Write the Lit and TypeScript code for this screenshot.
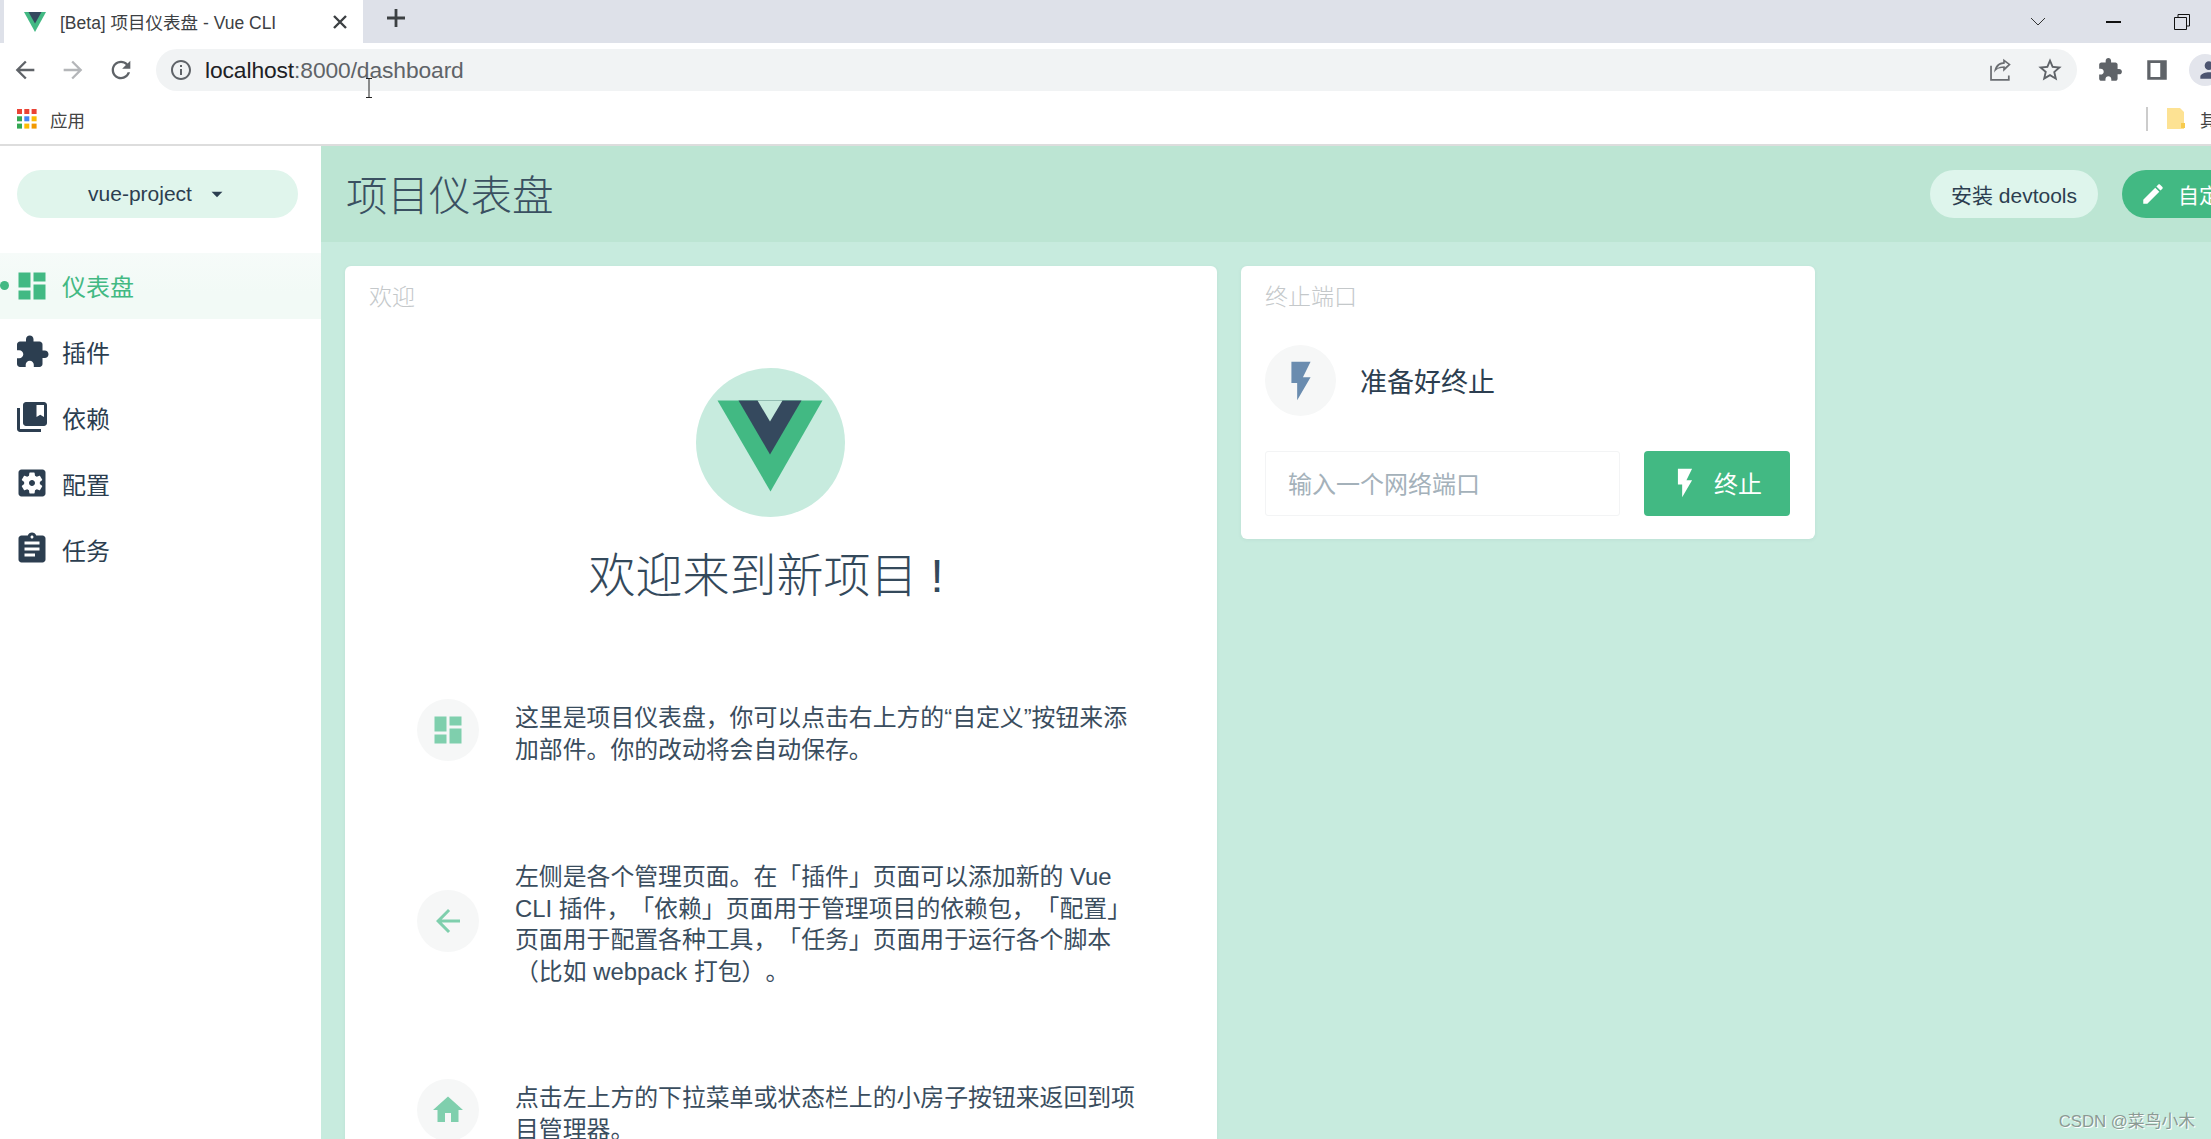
import { LitElement, html, css, svg } from "lit";
import { customElement } from "lit/decorators.js";

const P: Record<string, string> = {
  dashboard: "M3 13h8V3H3v10zm0 8h8v-6H3v6zm10 0h8V11h-8v10zm0-18v6h8V3h-8z",
  extension: "M20.5 11H19V7c0-1.1-.9-2-2-2h-4V3.5C13 2.12 11.88 1 10.5 1S8 2.12 8 3.5V5H4c-1.1 0-1.99.9-1.99 2v3.8H3.5c1.49 0 2.7 1.21 2.7 2.7s-1.21 2.7-2.7 2.7H2V20c0 1.1.9 2 2 2h3.8v-1.5c0-1.49 1.21-2.7 2.7-2.7 1.49 0 2.7 1.21 2.7 2.7V22H17c1.1 0 2-.9 2-2v-4h1.5c1.38 0 2.5-1.12 2.5-2.5S21.88 11 20.5 11z",
  book: "M4 6H2v14c0 1.1.9 2 2 2h14v-2H4V6zm16-4H8c-1.1 0-2 .9-2 2v12c0 1.1.9 2 2 2h12c1.1 0 2-.9 2-2V4c0-1.1-.9-2-2-2zm0 10l-2.5-1.5L15 12V4h5v8z",
  settings: "M12 10c-1.1 0-2 .9-2 2s.9 2 2 2 2-.9 2-2-.9-2-2-2zm7-7H5c-1.11 0-2 .9-2 2v14c0 1.1.89 2 2 2h14c1.11 0 2-.9 2-2V5c0-1.1-.89-2-2-2zm-1.75 9c0 .23-.02.46-.05.68l1.48 1.16c.13.11.17.3.08.45l-1.4 2.42c-.09.15-.27.21-.43.15l-1.74-.7c-.36.28-.76.51-1.18.69l-.26 1.85c-.03.17-.18.3-.35.3h-2.8c-.17 0-.32-.13-.35-.29l-.26-1.85c-.43-.18-.82-.41-1.18-.69l-1.74.7c-.16.06-.34 0-.43-.15l-1.4-2.42c-.09-.15-.05-.34.08-.45l1.48-1.16c-.03-.23-.05-.46-.05-.69 0-.23.02-.46.05-.68l-1.48-1.16c-.13-.11-.17-.3-.08-.45l1.4-2.42c.09-.15.27-.21.43-.15l1.74.7c.36-.28.76-.51 1.18-.69l.26-1.85c.03-.17.18-.3.35-.3h2.8c.17 0 .32.13.35.29l.26 1.85c.43.18.82.41 1.18.69l1.74-.7c.16-.06.34 0 .43.15l1.4 2.42c.09.15.05.34-.08.45l-1.48 1.16c.03.23.05.46.05.69z",
  assignment: "M19 3h-4.18C14.4 1.84 13.3 1 12 1c-1.3 0-2.4.84-2.82 2H5c-1.1 0-2 .9-2 2v14c0 1.1.9 2 2 2h14c1.1 0 2-.9 2-2V5c0-1.1-.9-2-2-2zm-7 0c.55 0 1 .45 1 1s-.45 1-1 1-1-.45-1-1 .45-1 1-1zm2 14H7v-2h7v2zm3-4H7v-2h10v2zm0-4H7V7h10v2z",
  flash: "M7 2v11h3v9l7-12h-4l4-8z",
  edit: "M3 17.25V21h3.75L17.81 9.94l-3.75-3.75L3 17.25zM20.71 7.04c.39-.39.39-1.02 0-1.41l-2.34-2.34c-.39-.39-1.02-.39-1.41 0l-1.83 1.83 3.75 3.75 1.83-1.83z",
  back: "M20 11H7.83l5.59-5.59L12 4l-8 8 8 8 1.41-1.41L7.83 13H20v-2z",
  forward: "M12 4l-1.41 1.41L16.17 11H4v2h12.17l-5.58 5.59L12 20l8-8z",
  home: "M10 20v-6h4v6h5v-8h3L12 3 2 12h3v8z",
  drop: "M7 10l5 5 5-5z",
  refresh: "M17.65 6.35C16.2 4.9 14.21 4 12 4c-4.42 0-7.99 3.58-7.99 8s3.57 8 7.99 8c3.73 0 6.84-2.55 7.73-6h-2.08c-.82 2.33-3.04 4-5.65 4-3.31 0-6-2.69-6-6s2.69-6 6-6c1.66 0 3.14.69 4.22 1.78L13 11h7V4l-2.35 2.35z",
  star: "M22 9.24l-7.19-.62L12 2 9.19 8.63 2 9.24l5.46 4.73L5.82 21 12 17.27 18.18 21l-1.63-7.03L22 9.24zM12 15.4l-3.76 2.27 1-4.28-3.32-2.88 4.38-.38L12 6.1l1.71 4.04 4.38.38-3.32 2.88 1 4.28L12 15.4z",
  person: "M12 12c2.21 0 4-1.79 4-4s-1.79-4-4-4-4 1.79-4 4 1.79 4 4 4zm0 2c-2.67 0-8 1.34-8 4v2h16v-2c0-2.66-5.33-4-8-4z",
  info: "M11 7h2v2h-2zm0 4h2v6h-2zm1-9C6.48 2 2 6.48 2 12s4.48 10 10 10 10-4.48 10-10S17.52 2 12 2zm0 18c-4.41 0-8-3.59-8-8s3.59-8 8-8 8 3.59 8 8-3.59 8-8 8z",
  share: "M2 8v14h18v-5h-1.600v3.400H3.600V8H2zm19-1-7-5.500v3.300C8.500 5.200 6 9 5.700 14.500 7.500 11.300 10 10.200 14 10.200v3.300L21 7zM15.500 4.700 18.700 7l-3.200 2.800V8.600c-3.200 0-5.600.7-7.200 2.300 1-2.900 3.400-4.500 7.200-4.600V4.700z",
  panel: "M3 3h18v18H3V3zm3 2.500v13h9v-13H6z",
};

const icon = (name: string, cls: string) =>
  html`<svg class="ic ${cls}" viewBox="0 0 24 24" aria-hidden="true"><path d=${P[name]}></path></svg>`;

const grid = [
  ["#ea4335", "#ea4335", "#ea4335"],
  ["#34a853", "#4285f4", "#fbbc04"],
  ["#34a853", "#fbbc04", "#f29900"],
];

const nav = [
  { i: "dashboard", t: "仪表盘", active: true },
  { i: "extension", t: "插件" },
  { i: "book", t: "依赖" },
  { i: "settings", t: "配置" },
  { i: "assignment", t: "任务" },
];

@customElement("app-root")
export class AppRoot extends LitElement {
  static styles = css`
    :host {
      display: block;
      position: relative;
      width: 2211px;
      height: 1139px;
      overflow: hidden;
      background: #fff;
      color: #2c3e50;
      font-family: "Liberation Sans", "Noto Sans CJK SC", sans-serif;
      font-weight: 400;
    }
    * { box-sizing: border-box; }
    .ic { display: block; flex: none; fill: currentColor; }
    .tabs { height: 43px; background: #dee1e9; display: flex; align-items: stretch; padding-left: 4px; }
    .tab { width: 359px; background: #fff; display: flex; align-items: center; padding-left: 20px; color: #3c4043; flex: none; }
    .tab-title { margin-left: 14px; font-size: 17.5px; white-space: nowrap; }
    .x { margin-left: auto; margin-right: 13px; width: 20px; height: 20px; }
    .plus { width: 30px; height: 30px; margin: 3px 0 0 18px; fill: #3c4043; }
    .win { margin-left: auto; display: flex; align-items: center; color: #222; }
    .chev { width: 16px; height: 10px; margin-right: 60px; fill: none; stroke: #333; stroke-width: 1; }
    .min { width: 15px; height: 2px; background: #111; margin-right: 53px; }
    .rest { width: 16px; height: 16px; margin-right: 21px; fill: none; stroke: #111; stroke-width: 1; }
    .bar { height: 54px; display: flex; align-items: center; padding-left: 1px; background: #fff; }
    .navb { width: 48px; display: flex; justify-content: center; flex: none; }
    .s26 { width: 28px; height: 28px; color: #5f6368; }
    .fwd { color: #b4b6b9; }
    .addr { margin-left: 11px; width: 1921px; height: 42px; border-radius: 21px; background: #f1f3f4; display: flex; align-items: center; padding-left: 13px; flex: none; }
    .info { width: 24px; height: 24px; color: #5f6368; }
    .url { margin-left: 12px; font-size: 22.8px; color: #5f6368; letter-spacing: -0.1px; white-space: nowrap; }
    .url b { font-weight: 400; color: #202124; }
    .share { width: 26px; height: 26px; color: #6a6d71; margin-left: auto; }
    .star { width: 28px; height: 28px; color: #5f6368; margin: 0 13px 0 22px; }
    .puzzle { width: 26px; height: 26px; color: #5f6368; margin-left: 20px; }
    .panel { width: 26px; height: 26px; color: #5f6368; margin-left: 21px; }
    .avatar { width: 32px; height: 32px; border-radius: 50%; background: #e3e5ec; margin-left: 19px; flex: none; overflow: hidden; color: #4d5570; display: flex; align-items: center; justify-content: center; padding-left: 7px; }
    .avatar .ic { width: 26px; height: 26px; }
    .marks { height: 49px; border-bottom: 2px solid #dddddd; display: flex; align-items: center; padding: 0 0 3px 17px; font-size: 17.5px; color: #444; }
    .apps { width: 20px; height: 20px; }
    .marks .lbl { margin-left: 13px; }
    .sep { width: 2px; height: 24px; background: #ccc; margin-left: auto; }
    .folder { width: 20px; height: 22px; margin-left: 18px; flex: none; }
    .other { margin-left: 14px; white-space: nowrap; width: 11px; overflow: hidden; flex: none; }
    .page { display: flex; height: 993px; }
    .side { width: 321px; flex: none; background: #fff; padding-top: 24px; }
    .pill { height: 48px; border-radius: 24px; background: #e0f5ec; margin: 0 23px 0 17px; display: flex; align-items: center; justify-content: center; font-size: 21px; color: #2c3e50; padding-left: 3px; }
    .pill .ic { width: 26px; height: 26px; margin-left: 12px; }
    .menu { margin-top: 35px; }
    .item { height: 65.8px; display: flex; align-items: center; padding-left: 14px; font-size: 24px; gap: 12px; color: #2c3e50; position: relative; }
    .item.on { color: #42b983; background: linear-gradient(#f6fbf9, #f2faf6 60%); }
    .item.on::before { content: ""; position: absolute; left: 0; top: 28px; width: 9px; height: 9px; border-radius: 50%; background: #42b983; }
    .s36 { width: 36px; height: 36px; }
    .main { flex: 1; min-width: 0; background: #c7ebde; }
    .head { height: 96px; background: #bce5d3; display: flex; align-items: center; padding-left: 25px; margin-bottom: 24px; }
    .head h1 { margin: -2px 0 0; font-size: 41.5px; font-weight: 300; color: #3a5061; }
    .tool { height: 48px; border-radius: 24px; display: flex; align-items: center; font-size: 21px; flex: none; }
    .dev { margin-left: auto; width: 168px; justify-content: center; background: #def5ec; color: #2c3e50; }
    .cust { margin-left: 24px; width: 196px; margin-right: -107px; background: #42b983; color: #fff; padding-left: 18px; gap: 12px; }
    .s24 { width: 26px; height: 26px; }
    .cards { display: flex; align-items: flex-start; gap: 24px; padding-left: 24px; }
    .card { background: #fff; border-radius: 6px; box-shadow: 0 1px 4px rgba(44, 62, 80, 0.06); flex: none; }
    .welcome { width: 872px; height: 900px; padding: 16px 46px 0 24px; }
    .kill { width: 574px; height: 273px; padding: 16px 24px 0 24px; }
    .ct { font-size: 23px; color: #c4c8ca; line-height: 31px; font-weight: 300; }
    .hero { display: flex; flex-direction: column; align-items: center; margin-top: 55px; }
    .logo { width: 149px; height: 149px; display: block; }
    .hero h2 { margin: 29px 8px 0 0; font-size: 47px; font-weight: 300; line-height: 60px; color: #34495b; white-space: nowrap; }
    .tip { display: flex; align-items: center; margin-left: 48px; gap: 36px; font-size: 23.85px; line-height: 31.5px; color: #3a4d5e; white-space: nowrap; text-spacing-trim: space-all; }
    .tip > div:last-child { padding-top: 7px; }
    .tip1 { margin-top: 89px; }
    .tip2 { margin-top: 89px; }
    .tip3 { margin-top: 88px; }
    .round { width: 62px; height: 62px; border-radius: 50%; background: #f6f7f7; display: flex; align-items: center; justify-content: center; color: #7fcfad; flex: none; }
    .ready { display: flex; align-items: center; gap: 24px; margin-top: 32px; font-size: 27px; font-weight: 400; color: #2c3e50; }
    .big { width: 71px; height: 71px; border-radius: 50%; background: #f6f7f7; display: flex; align-items: center; justify-content: center; color: #6a8caf; }
    .s46 { width: 46px; height: 46px; }
    .form { display: flex; gap: 24px; margin-top: 35px; align-items: stretch; height: 65px; }
    .input { width: 355px; border: 1px solid #f3f4f5; border-radius: 3px; display: flex; align-items: center; padding: 0 0 2px 22px; font-size: 24px; color: #a4b1ba; flex: none; }
    .go { width: 146px; background: #42b983; color: #fff; border-radius: 4px; display: flex; align-items: center; padding: 0 0 2px 24px; gap: 12px; font-size: 24px; flex: none; }
    .s34 { width: 34px; height: 34px; }
    .cursor { position: absolute; left: 364px; top: 78px; width: 10px; height: 20px; fill: none; stroke: #222; stroke-width: 1; }
    .mark { position: absolute; right: 16px; top: 1108px; font-size: 16.8px; color: #8b9a94; text-shadow: 1px 1px 0 #fff; white-space: nowrap; }
  `;

  render() {
    return html`
      <div class="tabs">
        <div class="tab">
          <svg class="ic" width="22" height="20" viewBox="0 0 22 20"><path d="M0 0h22L11 20z" fill="#42b983"></path><path d="M4.5 0h13L11 11.5z" fill="#34495e"></path></svg>
          <span class="tab-title">[Beta] 项目仪表盘 - Vue CLI</span>
          <svg class="x" viewBox="0 0 20 20"><path d="M4 4l12 12M16 4L4 16" stroke="#3c4043" stroke-width="2.4" fill="none"></path></svg>
        </div>
        <svg class="ic plus" viewBox="0 0 30 30"><path d="M13.6 6h2.8v7.6H24v2.8h-7.6V24h-2.8v-7.6H6v-2.8h7.6z"></path></svg>
        <div class="win">
          <svg class="ic chev" viewBox="0 0 16 10"><path d="M1 1l7 7 7-7"></path></svg>
          <div class="min"></div>
          <svg class="ic rest" viewBox="0 0 16 16"><path d="M4 3V.5h11.5V12H13M.5 3.5h12v12H.5z"></path></svg>
        </div>
      </div>
      <div class="bar">
        <div class="navb">${icon("back", "s26")}</div>
        <div class="navb">${icon("forward", "s26 fwd")}</div>
        <div class="navb">${icon("refresh", "s26")}</div>
        <div class="addr">
          ${icon("info", "info")}
          <span class="url"><b>localhost</b>:8000/dashboard</span>
          ${icon("share", "share")}
          ${icon("star", "star")}
        </div>
        ${icon("extension", "puzzle")}
        ${icon("panel", "panel")}
        <div class="avatar">${icon("person", "")}</div>
      </div>
      <div class="marks">
        <svg class="apps" viewBox="0 0 20 20">
          ${grid.map((row, y) => row.map((c, x) => svg`<rect x=${x * 7.3} y=${y * 7.3} width="5" height="5" fill=${c}></rect>`))}
        </svg>
        <span class="lbl">应用</span>
        <div class="sep"></div>
        <svg class="folder" viewBox="0 0 20 22"><path d="M1 0h13l4 4v17H1z" fill="#fde293"></path><path d="M15 15h4v5h-4z" fill="#f7cb4d"></path></svg>
        <span class="other">其他书签</span>
      </div>
      <div class="page">
        <aside class="side">
          <div class="pill"><span>vue-project</span>${icon("drop", "")}</div>
          <div class="menu">
            ${nav.map(
              (n) => html`<div class="item ${n.active ? "on" : ""}">${icon(n.i, "s36")}<span>${n.t}</span></div>`
            )}
          </div>
        </aside>
        <main class="main">
          <header class="head">
            <h1>项目仪表盘</h1>
            <div class="tool dev">安装 devtools</div>
            <div class="tool cust">${icon("edit", "s24")}<span>自定义</span></div>
          </header>
          <div class="cards">
            <section class="card welcome">
              <div class="ct">欢迎</div>
              <div class="hero">
                <svg class="logo" viewBox="0 0 149 149">
                  <circle cx="74.5" cy="74.5" r="74.5" fill="#c7ebde"></circle>
                  <path d="M21.5 32.5h105l-52 91z" fill="#42b983"></path>
                  <path d="M42.5 32.5h63l-31.500 54z" fill="#35495e"></path>
                  <path d="M61.500 32.500h25L74 53.500z" fill="#c7ebde"></path>
                </svg>
                <h2>欢迎来到新项目 !</h2>
              </div>
              <div class="tip tip1">
                <div class="round">${icon("dashboard", "s36")}</div>
                <div>这里是项目仪表盘，你可以点击右上方的“自定义”按钮来添<br />加部件。你的改动将会自动保存。</div>
              </div>
              <div class="tip tip2">
                <div class="round">${icon("back", "s36")}</div>
                <div>左侧是各个管理页面。在「插件」页面可以添加新的 Vue<br />CLI 插件，「依赖」页面用于管理项目的依赖包，「配置」<br />页面用于配置各种工具，「任务」页面用于运行各个脚本<br />（比如 webpack 打包）。</div>
              </div>
              <div class="tip tip3">
                <div class="round">${icon("home", "s36")}</div>
                <div>点击左上方的下拉菜单或状态栏上的小房子按钮来返回到项<br />目管理器。</div>
              </div>
            </section>
            <section class="card kill">
              <div class="ct">终止端口</div>
              <div class="ready">
                <div class="big">${icon("flash", "s46")}</div>
                <span>准备好终止</span>
              </div>
              <div class="form">
                <div class="input">输入一个网络端口</div>
                <div class="go">${icon("flash", "s34")}<span>终止</span></div>
              </div>
            </section>
          </div>
        </main>
      </div>
      <svg class="cursor" viewBox="0 0 10 20"><path d="M2 .5h6M5 .5v19M2 19.500h6"></path></svg>
      <div class="mark">CSDN @菜鸟小木</div>
    `;
  }
}
